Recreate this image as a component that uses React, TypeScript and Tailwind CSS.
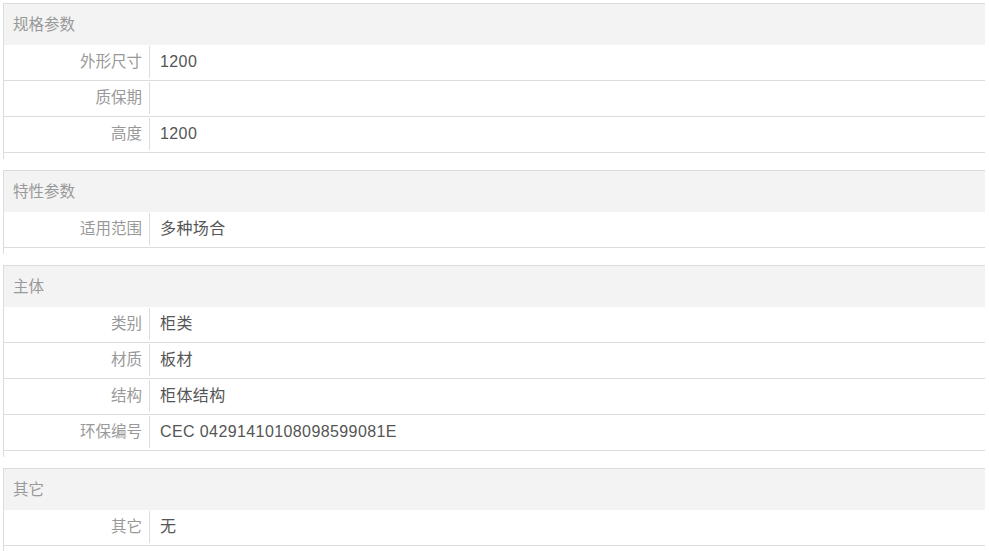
import React from 'react'

type Section = { title: string; rows: [string, string][] }

const sections: Section[] = [
    {
        title: '规格参数',
        rows: [
            ['外形尺寸', '1200'],
            ['质保期', ''],
            ['高度', '1200'],
        ],
    },
    { title: '特性参数', rows: [['适用范围', '多种场合']] },
    {
        title: '主体',
        rows: [
            ['类别', '柜类'],
            ['材质', '板材'],
            ['结构', '柜体结构'],
            ['环保编号', 'CEC 04291410108098599081E'],
        ],
    },
    { title: '其它', rows: [['其它', '无']] },
]

const font = "font-['Liberation_Sans','Noto_Sans_CJK_SC',sans-serif]"

// one block of params
const ParamBlock = ({ title, rows }: Section) => (
    <div className="border-l border-t border-[#dcdcdc] pb-[6px] mb-[11px]">
        <div className="h-[41px] bg-[#f3f3f3] flex items-center pl-[9px] text-[15.5px] text-[#999]">
            {title}
        </div>
        {rows.map(([label, value], i) => (
            <div key={i} className="flex h-[36px] border-b border-[#dcdcdc]">
                <div className="w-[146px] h-[32px] mt-[1px] border-r border-[#dcdcdc] flex items-center justify-end pr-[7px] text-[15.5px] text-[#999]">
                    {label}
                </div>
                <div className="flex-1 flex items-center pl-[10px] pb-[2px] text-[16px] text-[#555] tracking-[0.4px]">
                    {value}
                </div>
            </div>
        ))}
    </div>
)

export default function App() {
    return (
        <div className={`w-[989px] h-[551px] overflow-hidden bg-white ${font}`}>
            <div className="ml-[3px] mt-[3px] w-[982px]">
                {sections.map((s) => (
                    <ParamBlock key={s.title} {...s} />
                ))}
            </div>
        </div>
    )
}
